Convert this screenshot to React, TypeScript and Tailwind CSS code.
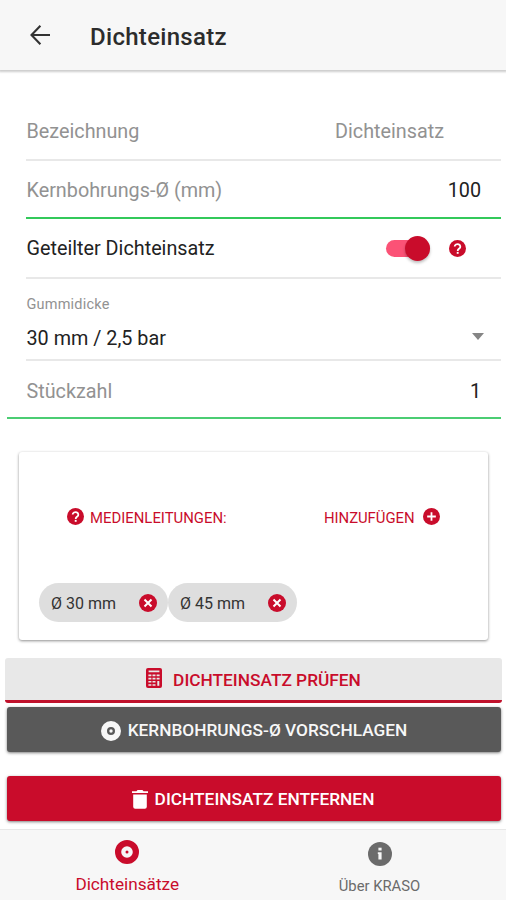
import React from 'react';

interface IconProps {
  className?: string;
}

const BackIcon: React.FC<IconProps> = ({ className }) => (
  <svg viewBox="0 0 20 20" className={className} fill="none" stroke="currentColor" strokeWidth="2.1">
    <path d="M10.4 0.8 1.5 10l8.9 9.2M1.5 10H20" />
  </svg>
);

const HelpIcon: React.FC<IconProps> = ({ className }) => (
  <svg viewBox="0 0 18 18" className={className}>
    <circle cx="9" cy="9" r="9" fill="currentColor" />
    <path d="M6 7a3 2.7 0 1 1 4.9 2.1C9.8 9.9 9.2 10.1 9.2 11.6" fill="none" stroke="#fff" strokeWidth="1.9" />
    <rect x="8.2" y="12.6" width="2" height="2" fill="#fff" />
  </svg>
);

const AddIcon: React.FC<IconProps> = ({ className }) => (
  <svg viewBox="0 0 18 18" className={className}>
    <circle cx="9" cy="9" r="9" fill="currentColor" />
    <path d="M9 4.4v9.2M4.4 9h9.2" stroke="#fff" strokeWidth="1.9" />
  </svg>
);

const RemoveIcon: React.FC<IconProps> = ({ className }) => (
  <svg viewBox="0 0 18 18" className={className}>
    <circle cx="9" cy="9" r="9" fill="currentColor" />
    <path d="M5.5 5.5l7 7M12.5 5.5l-7 7" stroke="#fff" strokeWidth="2" />
  </svg>
);

const DiscIcon: React.FC<IconProps> = ({ className }) => (
  <svg viewBox="0 0 24 24" className={className} fill="currentColor">
    <path
      fillRule="evenodd"
      d="M12 0a12 12 0 1 0 0 24 12 12 0 0 0 0-24zm0 6.2a5.8 5.8 0 1 1 0 11.6 5.8 5.8 0 0 1 0-11.6z"
    />
    <circle cx="12" cy="12" r="1.5" />
  </svg>
);

const DrillIcon: React.FC<IconProps> = ({ className }) => (
  <svg viewBox="0 0 20 20" className={className} fill="currentColor">
    <path
      fillRule="evenodd"
      d="M10 0a10 10 0 1 0 0 20 10 10 0 0 0 0-20zm0 6a4 4 0 1 1 0 8 4 4 0 0 1 0-8z"
    />
    <circle cx="10" cy="10" r="1.7" />
  </svg>
);

const CalculatorIcon: React.FC<IconProps> = ({ className }) => (
  <svg viewBox="0 0 16 20" className={className}>
    <rect width="16" height="20" rx="2" fill="currentColor" />
    <path
      d="M2.6 3.4h10.8M2.4 7.4h3M6.5 7.4h3M10.6 7.4h3M2.4 10.6h3M6.5 10.6h3M10.6 10.6h3M2.4 13.8h3M6.5 13.8h3M2.4 17h3M6.5 17h3"
      stroke="#e8e8e8"
      strokeWidth="1.6"
    />
    <path d="M12.3 13v4.8" stroke="#e8e8e8" strokeWidth="2" />
  </svg>
);

const TrashIcon: React.FC<IconProps> = ({ className }) => (
  <svg viewBox="0 0 16 19" className={className} fill="currentColor">
    <path d="M0 1.2h4.4L5.6 0h4.8l1.2 1.2H16v1.9H0zM1.2 4.6h13.6v12.2a2 2 0 0 1-2 2H3.2a2 2 0 0 1-2-2z" />
  </svg>
);

const InfoIcon: React.FC<IconProps> = ({ className }) => (
  <svg viewBox="0 0 24 24" className={className}>
    <circle cx="12" cy="12" r="12" fill="currentColor" />
    <rect x="10.4" y="5.7" width="3.2" height="2.8" fill="#f7f7f7" />
    <path d="M9.8 10.2h3.8v7.4h-3.2v-5.6h-.6z" fill="#f7f7f7" />
  </svg>
);

interface ChipProps {
  label: string;
}

const Chip: React.FC<ChipProps> = ({ label }) => (
  <div className="flex h-[39px] w-[129px] items-center justify-between rounded-full bg-[#dedede] pr-[11px] pl-3">
    <span className="pt-0.5 text-[16px] text-[#333]">{label}</span>
    <RemoveIcon className="h-[18px] w-[18px] text-[#c90c2b]" />
  </div>
);

const App: React.FC = () => {
  return (
    <div className="flex h-[900px] w-[506px] flex-col overflow-hidden bg-white font-['Roboto',sans-serif] text-[19.8px] leading-6 whitespace-nowrap">
      {/* Toolbar */}
      <header className="flex h-[70px] shrink-0 items-center bg-[#f7f7f7] pl-[30px] shadow-[0_1px_2px_1px_rgba(0,0,0,0.2)]">
        <BackIcon className="h-5 w-5 text-[#333]" />
        <h1 className="ml-10 pt-1 text-[24px] font-medium tracking-[0.3px] text-[#2c2c2c]">Dichteinsatz</h1>
      </header>

      {/* Form */}
      <main className="flex flex-1 flex-col pt-8">
        <div className="mr-[5px] ml-[26px] flex h-[59px] items-center justify-between border-b-2 border-[#e8e8e8] pt-0.5 pr-[57px] pl-[0.5px] text-[#929292]">
          <span>Bezeichnung</span>
          <span>Dichteinsatz</span>
        </div>
        <div className="mr-[5px] ml-[26px] flex h-[58px] items-center justify-between border-b-2 border-[#32c95a] pt-1 pr-5 pl-[0.5px]">
          <span className="text-[#929292]">Kernbohrungs-Ø (mm)</span>
          <span className="text-[#222]">100</span>
        </div>
        <div className="mr-[5px] ml-[26px] flex h-[60px] items-center border-b-2 border-[#e8e8e8] pr-[35px] pl-[0.5px]">
          <span className="flex-1 pt-0.5 text-[#222]">Geteilter Dichteinsatz</span>
          <div className="flex h-[17px] w-[44px] items-center justify-end rounded-full bg-[#fb5276]">
            <div className="h-[25px] w-[25px] shrink-0 rounded-full bg-[#c90c2b] shadow-[0_2px_3px_rgba(0,0,0,0.25)]" />
          </div>
          <HelpIcon className="ml-[19px] h-[17px] w-[17px] text-[#c90c2b]" />
        </div>
        <div className="mr-[5px] ml-[26px] h-[82px] border-b-2 border-[#e8e8e8] pt-4 pr-[17px] pl-[0.5px]">
          <div className="text-[14.5px] leading-5 tracking-[0.2px] text-[#929292]">Gummidicke</div>
          <div className="mt-[11px] flex items-center justify-between">
            <span className="pt-px text-[#222]">30 mm / 2,5 bar</span>
            <svg viewBox="0 0 12 7" className="mb-[5px] h-[7px] w-3 fill-[#858585]">
              <path d="M0 0h12L6 7z" />
            </svg>
          </div>
        </div>
        <div className="mr-[5px] ml-[7px] flex h-[58px] items-center justify-between border-b-2 border-[#4bcd73] pt-1.5 pr-5 pl-[19.5px]">
          <span className="text-[#929292]">Stückzahl</span>
          <span className="text-[#222]">1</span>
        </div>

        {/* Pipes */}
        <section className="mt-[33px] mr-[18px] ml-[19px] flex h-[188px] flex-col rounded-[3px] bg-white shadow-[0_1px_3px_rgba(0,0,0,0.45)]">
          <div className="mt-[52px] flex h-6 items-center pl-12 text-[14.9px] text-[#c90c2b]">
            <HelpIcon className="h-[17px] w-[17px]" />
            <span className="ml-[6px] w-[234px] pt-1">MEDIENLEITUNGEN:</span>
            <span className="w-[99px] pt-1 tracking-[-0.05px]">HINZUFÜGEN</span>
            <AddIcon className="h-[17px] w-[17px]" />
          </div>
          <div className="mt-[55px] ml-5 flex">
            <Chip label="Ø 30 mm" />
            <Chip label="Ø 45 mm" />
          </div>
        </section>

        {/* Actions */}
        <button className="mt-[18px] ml-[5px] flex h-[45px] w-[497px] items-center justify-center rounded-[3px] border-b-[3px] border-[#c0122c] bg-[#e8e8e8] text-[17.3px] font-medium text-[#c90c2b]">
          <CalculatorIcon className="mr-[11px] mb-0.5 h-5 w-4" />
          <span className="pt-0.5">DICHTEINSATZ PRÜFEN</span>
        </button>
        <button className="mt-1 ml-[7px] flex h-[45px] w-[494px] items-center justify-center rounded-[3px] bg-[#595959] text-[17.25px] font-medium text-[#f7f7f7] shadow-[0_1px_3px_rgba(0,0,0,0.5)]">
          <DrillIcon className="mt-0.5 mr-[7px] h-5 w-5" />
          KERNBOHRUNGS-Ø VORSCHLAGEN
        </button>
        <button className="mt-6 ml-[7px] flex h-[45px] w-[494px] items-center justify-center rounded-[3px] bg-[#c90c2b] pr-[2px] text-[17.3px] font-medium text-white shadow-[0_1px_3px_rgba(0,0,0,0.5)]">
          <TrashIcon className="mt-0.5 mr-[7px] h-[19px] w-4" />
          DICHTEINSATZ ENTFERNEN
        </button>
      </main>

      {/* Tabs */}
      <nav className="flex h-[71px] shrink-0 border-t border-[#e8e8e8] bg-[#f7f7f7]">
        <div className="flex flex-1 flex-col items-center pt-[10px] text-[17.2px] text-[#c90c2b]">
          <DiscIcon className="h-6 w-6" />
          <span className="mt-2 pl-[1.5px]">Dichteinsätze</span>
        </div>
        <div className="flex flex-1 flex-col items-center pt-3 text-[14.8px] text-[#6b6b6b]">
          <InfoIcon className="h-6 w-6" />
          <span className="mt-2">Über KRASO</span>
        </div>
      </nav>
    </div>
  );
};

export default App;
